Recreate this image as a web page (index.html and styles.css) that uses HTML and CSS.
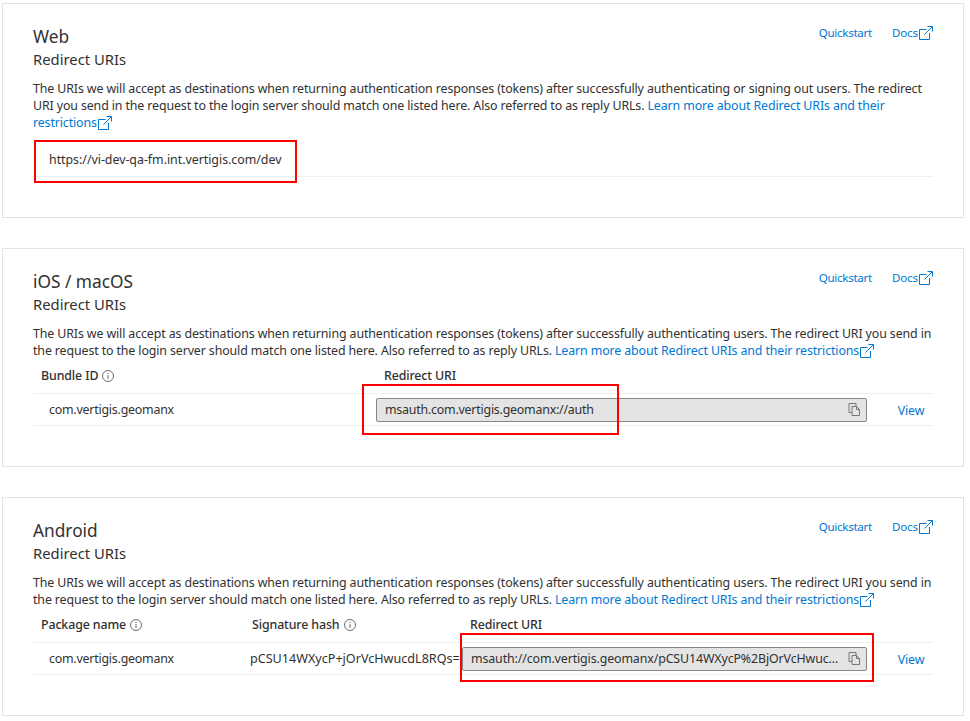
FILE: index.html
```html
<!DOCTYPE html>
<html lang="en">
<head>
    <meta charset="UTF-8">
    <meta name="viewport" content="width=device-width, initial-scale=1.0">
    <title>Redirect URIs</title>
    <link rel="stylesheet" href="styles.css">
</head>
<body>
    <svg class="sprites" width="0" height="0">
        <symbol id="ext" viewBox="0 0 14 14">
            <path d="M7.5 3.5H.5v10h10V7M5.5 8.5 13 1M8.5.5h5v5" fill="none" stroke="currentColor"/>
        </symbol>
        <symbol id="info" viewBox="0 0 12 12">
            <circle cx="6" cy="6" r="5.5" fill="none" stroke="currentColor" stroke-width=".9"/>
            <path d="M6 5.2v3.6M6 3v1.1" fill="none" stroke="currentColor"/>
        </symbol>
        <symbol id="copy" viewBox="0 0 12 13">
            <path d="M8 3.5V.5H1v9h3M4 3.5h4.5l3 3v6H4zM8.5 3.5v3h3" fill="none" stroke="currentColor"/>
        </symbol>
    </svg>

    <!-- Web -->
    <div class="card">
        <div class="card-head">
            <div>
                <h2>Web</h2>
                <h3>Redirect URIs</h3>
            </div>
            <div class="links">
                <a href="#">Quickstart</a>
                <a href="#">Docs<svg class="ext"><use href="#ext"/></svg></a>
            </div>
        </div>
        <p class="desc">The URIs we will accept as destinations when returning authentication responses (tokens) after successfully authenticating or signing out users. The redirect URI you send in the request to the login server should match one listed here. Also referred to as reply URLs. <a href="#">Learn more about Redirect URIs and their restrictions<svg class="ext"><use href="#ext"/></svg></a></p>
        <div class="row row-web">https://vi-dev-qa-fm.int.vertigis.com/dev</div>
        <div class="mark mark-web"></div>
    </div>

    <!-- iOS / macOS -->
    <div class="card">
        <div class="card-head">
            <div>
                <h2>iOS / macOS</h2>
                <h3>Redirect URIs</h3>
            </div>
            <div class="links">
                <a href="#">Quickstart</a>
                <a href="#">Docs<svg class="ext"><use href="#ext"/></svg></a>
            </div>
        </div>
        <p class="desc">The URIs we will accept as destinations when returning authentication responses (tokens) after successfully authenticating users. The redirect URI you send in the request to the login server should match one listed here. Also referred to as reply URLs. <a href="#">Learn more about Redirect URIs and their restrictions<svg class="ext"><use href="#ext"/></svg></a></p>
        <div class="table table-ios">
            <div class="th">Bundle ID<svg class="info"><use href="#info"/></svg></div>
            <div class="th">Redirect URI</div>
            <div class="th"></div>
            <div class="td first">com.vertigis.geomanx</div>
            <div class="td">
                <div class="uri"><span class="uri-text">msauth.com.vertigis.geomanx://auth</span><svg class="copy"><use href="#copy"/></svg></div>
            </div>
            <div class="td last"><a href="#">View</a></div>
        </div>
        <div class="mark mark-ios"></div>
    </div>

    <!-- Android -->
    <div class="card">
        <div class="card-head">
            <div>
                <h2>Android</h2>
                <h3>Redirect URIs</h3>
            </div>
            <div class="links">
                <a href="#">Quickstart</a>
                <a href="#">Docs<svg class="ext"><use href="#ext"/></svg></a>
            </div>
        </div>
        <p class="desc">The URIs we will accept as destinations when returning authentication responses (tokens) after successfully authenticating users. The redirect URI you send in the request to the login server should match one listed here. Also referred to as reply URLs. <a href="#">Learn more about Redirect URIs and their restrictions<svg class="ext"><use href="#ext"/></svg></a></p>
        <div class="table table-android">
            <div class="th">Package name<svg class="info"><use href="#info"/></svg></div>
            <div class="th">Signature hash<svg class="info"><use href="#info"/></svg></div>
            <div class="th th-uri">Redirect URI</div>
            <div class="th"></div>
            <div class="td first">com.vertigis.geomanx</div>
            <div class="td hash">pCSU14WXycP+jOrVcHwucdL8RQs=</div>
            <div class="td">
                <div class="uri"><span class="uri-text">msauth://com.vertigis.geomanx/pCSU14WXycP%2BjOrVcHwucdL8RQs%3D</span><svg class="copy"><use href="#copy"/></svg></div>
            </div>
            <div class="td last"><a href="#">View</a></div>
        </div>
        <div class="mark mark-android"></div>
    </div>
</body>
</html>
```

FILE: styles.css
```css
/* General Styles */
body {
    font-family: "Noto Sans", "Open Sans", sans-serif;
    font-size: 12.4px;
    line-height: 17px;
    letter-spacing: -0.12px;
    margin: 0;
    padding: 3px 6px 0 2px;
    background-color: #fff;
    color: #323130;
}

a {
    color: #0078d4;
    text-decoration: none;
}

.sprites {
    position: absolute;
}

/* Cards */
.card {
    position: relative;
    border: 1px solid #e3e3e3;
    padding: 21px 30px 40px;
    margin-bottom: 30px;
}

.card-head {
    display: flex;
    justify-content: space-between;
    align-items: flex-start;
}

h2 {
    font-size: 17.3px;
    font-weight: 400;
    line-height: 24px;
    letter-spacing: 0;
    margin: 0;
}

h3 {
    font-size: 14.8px;
    font-weight: 400;
    line-height: 21px;
    letter-spacing: 0;
    margin: 0;
}

.links {
    display: flex;
    gap: 20px;
    margin-top: -1px;
    font-size: 11.6px;
}

.links a:first-child {
    letter-spacing: -0.3px;
}

.desc {
    margin: 10px 0 0;
}

/* Icons */
.ext {
    width: 14px;
    height: 14px;
    margin-left: 1px;
    vertical-align: -3px;
}

.info {
    width: 12px;
    height: 12px;
    margin-left: 4px;
    vertical-align: -2px;
    color: #605e5c;
}

.copy {
    width: 12px;
    height: 13px;
    flex: none;
    color: #797775;
}

/* Tables */
.row-web {
    margin-top: 11px;
    padding: 9px 16px 8px;
    height: 17px;
    letter-spacing: -0.03px;
    border-bottom: 1px solid #efefef;
}

.table {
    display: grid;
    margin-top: 7px;
}

.table-ios {
    grid-template-columns: 343px 491px 1fr;
}

.table-android {
    grid-template-columns: 211px 218px 405px 1fr;
}

.th {
    font-weight: 500;
    padding: 1px 8px 0;
    height: 26px;
    border-bottom: 1px solid #efefef;
}

.td {
    height: 31px;
    display: flex;
    align-items: center;
    letter-spacing: -0.22px;
    border-bottom: 1px solid #efefef;
}

.first {
    padding-left: 16px;
}

.hash {
    font-size: 12.6px;
    letter-spacing: 0;
    padding-left: 6px;
    white-space: nowrap;
}

.last {
    justify-content: center;
    padding: 2px 0 0 22px;
    height: 29px;
    letter-spacing: -0.12px;
}

.uri {
    display: flex;
    align-items: center;
    justify-content: space-between;
    gap: 8px;
    box-sizing: border-box;
    width: 100%;
    height: 24px;
    padding: 0 6px 0 8px;
    background-color: #e4e4e4;
    border: 1px solid #8a8886;
    border-radius: 2px;
}

.uri-text {
    white-space: nowrap;
    overflow: hidden;
    text-overflow: ellipsis;
}

.table-android .uri-text {
    letter-spacing: -0.12px;
}

/* Red annotation boxes drawn over the screenshot */
.mark {
    position: absolute;
    box-sizing: border-box;
    border: 2px solid #f00;
}

.mark-web {
    left: 31px;
    top: 136px;
    width: 263px;
    height: 43px;
}

.mark-ios {
    left: 359px;
    top: 135px;
    width: 257px;
    height: 51px;
}

.mark-android {
    left: 457px;
    top: 135px;
    width: 414px;
    height: 49px;
}
```
